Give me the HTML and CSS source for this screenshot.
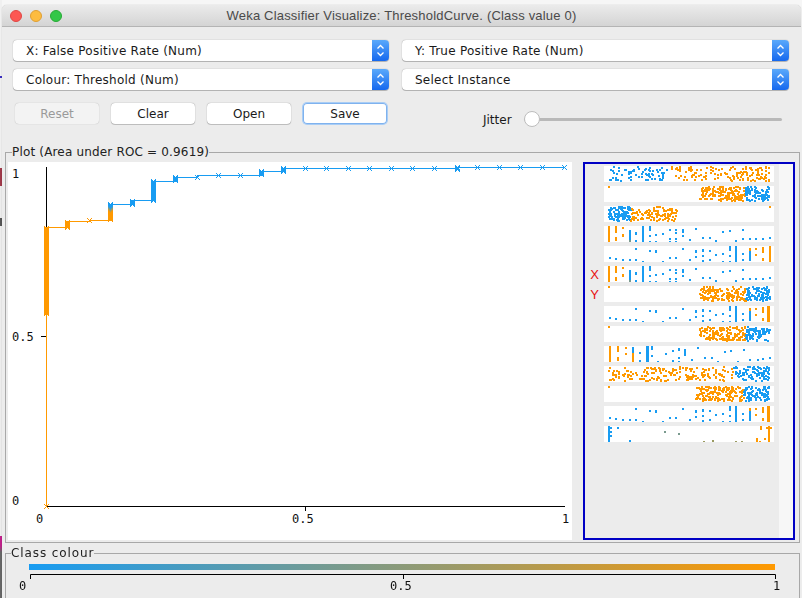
FILE: index.html
```html
<!DOCTYPE html>
<html lang="en">
<head>
    <meta charset="UTF-8">
    <meta name="viewport" content="width=device-width, initial-scale=1.0">
    <title>Weka Classifier Visualize</title>
    <link rel="stylesheet" href="styles.css">
</head>
<body>
    <div class="window">
        <div class="titlebar">
            <span class="light red"></span>
            <span class="light yellow"></span>
            <span class="light green"></span>
            <span class="title">Weka Classifier Visualize: ThresholdCurve. (Class value 0)</span>
        </div>

        <div class="combos">
            <div class="combo"><span>X: False Positive Rate (Num)</span><i class="arrows"><svg width="9" height="15" viewBox="0 0 9 15"><path d="M1.5 5.5 4.5 2.5 7.5 5.5M1.5 9.5 4.5 12.5 7.5 9.5"/></svg></i></div>
            <div class="combo"><span>Y: True Positive Rate (Num)</span><i class="arrows"><svg width="9" height="15" viewBox="0 0 9 15"><path d="M1.5 5.5 4.5 2.5 7.5 5.5M1.5 9.5 4.5 12.5 7.5 9.5"/></svg></i></div>
            <div class="combo"><span>Colour: Threshold (Num)</span><i class="arrows"><svg width="9" height="15" viewBox="0 0 9 15"><path d="M1.5 5.5 4.5 2.5 7.5 5.5M1.5 9.5 4.5 12.5 7.5 9.5"/></svg></i></div>
            <div class="combo"><span>Select Instance</span><i class="arrows"><svg width="9" height="15" viewBox="0 0 9 15"><path d="M1.5 5.5 4.5 2.5 7.5 5.5M1.5 9.5 4.5 12.5 7.5 9.5"/></svg></i></div>
        </div>

        <div class="toolbar">
            <div class="buttons">
                <button type="button" class="btn" disabled>Reset</button>
                <button type="button" class="btn">Clear</button>
                <button type="button" class="btn">Open</button>
                <button type="button" class="btn focused">Save</button>
            </div>
            <div class="jitter">
                <span>Jitter</span>
                <div class="slider"><div class="knob"></div></div>
            </div>
        </div>

        <fieldset class="group plot-group">
            <legend>Plot (Area under ROC = 0.9619)</legend>
            <div class="plot-body">
                <svg id="plot" class="plot" width="564" height="378" viewBox="8 162 564 378">
                    <g class="axis">
                        <path d="M46.5 167V506.5H565M305.5 506V511M41 336.5H46"/>
                        <text x="12" y="178">1</text>
                        <text x="12" y="341">0.5</text>
                        <text x="12" y="505">0</text>
                        <text x="36" y="523">0</text>
                        <text x="292" y="523">0.5</text>
                        <text x="562" y="523">1</text>
                    </g>
                    <path class="curve orange" d="M46.5 506V227.5H67.5V221.5H89.5V220.5H110.5V212"/>
                    <path class="curve blue" d="M110.5 212V204.5H132.5V200.5H153.5V181.5H175.5V177.5H197.5V175.5H261.5V171.5H283.5V168.5H457.5V167.5H565"/>
                </svg>
                <div class="attrs">
                    <div id="strips" class="strips"></div>
                    <div class="attrs-side"></div>
                </div>
            </div>
        </fieldset>

        <fieldset class="group class-group">
            <legend>Class colour</legend>
            <div class="colour-bar"></div>
            <svg class="colour-axis" width="790" height="24" viewBox="5 572 790 24">
                <path d="M29.5 579V574.5H774.5V579M402.5 574V579"/>
                <text x="18" y="590">0</text>
                <text x="389" y="590">0.5</text>
                <text x="772" y="590">1</text>
            </svg>
        </fieldset>
    </div>

    <script src="plot.js"></script>
</body>
</html>
```

FILE: styles.css
```css
*{
    margin: 0px;
    padding: 0px;
    box-sizing: border-box;
}

html, body{
    height: 100%;
    overflow: hidden;
}

body{
    background-color: #f6f6f6;
    /* bits of the desktop showing down the left edge */
    background-image: linear-gradient(to bottom,
        #f0f0f0 76px, #3a2fc0 76px, #3a2fc0 78px, #efefef 78px,
        #efefef 168px, #a03a4a 168px, #a03a4a 186px, #ececec 186px,
        #ececec 218px, #555 218px, #555 226px, #ececec 226px,
        #ececec 536px, #c0208a 536px, #c0208a 546px, #666 552px, #666 598px);
    background-size: 2px 100%;
    background-repeat: no-repeat;
    font-family: "DejaVu Sans", sans-serif;
    font-size: 12px;
    color: #1a1a1a;
}

.window{
    width: 799px;
    height: 593px;
    margin: 5px 0px 0px 2px;
    background-color: #ececec;
    border-radius: 5px 5px 0px 0px;
    box-shadow: 0px 0px 1px rgba(0, 0, 0, 0.35);
    overflow: hidden;
}

.titlebar{
    height: 22px;
    padding-left: 8px;
    display: flex;
    align-items: center;
    gap: 8px;
    background-image: linear-gradient(to bottom, #ebebeb, #d4d4d4);
    border-bottom: 1px solid #b4b4b4;
    position: relative;
}

.light{
    width: 12px;
    height: 12px;
    border-radius: 50%;
}
.red{ background-color: #fc5753; border: 1px solid #df4744; }
.yellow{ background-color: #fdbc40; border: 1px solid #de9f34; }
.green{ background-color: #33c748; border: 1px solid #27aa35; }

.title{
    position: absolute;
    left: 0px;
    right: 0px;
    text-align: center;
    font-family: "Liberation Sans", sans-serif;
    font-size: 13px;
    letter-spacing: 0.19px;
    color: #4a4a4a;
}

.combos{
    display: grid;
    grid-template-columns: 376px 387px;
    column-gap: 13px;
    row-gap: 8px;
    padding: 13px 0px 0px 11px;
}

.combo{
    height: 21px;
    display: flex;
    align-items: center;
    justify-content: space-between;
    padding-left: 13px;
    background-color: #fff;
    border-radius: 4px;
    letter-spacing: 0.25px;
    box-shadow: 0px 0px 1px rgba(0, 0, 0, 0.45), 0px 1px 0px rgba(0, 0, 0, 0.2);
}

.arrows{
    width: 17px;
    height: 21px;
    display: flex;
    align-items: center;
    justify-content: center;
    border-radius: 0px 4px 4px 0px;
    background-image: linear-gradient(to bottom, #5aa9fb, #1668ee);
}
.arrows path{
    fill: none;
    stroke: #fff;
    stroke-width: 1.3;
}

.toolbar{
    display: flex;
    padding: 13px 0px 0px 13px;
    height: 55px;
}

.buttons{
    display: flex;
    gap: 12px;
    width: 468px;
}

.btn{
    width: 84px;
    height: 21px;
    background-color: #fff;
    border: none;
    border-radius: 4px;
    font-family: "DejaVu Sans", sans-serif;
    font-size: 12px;
    color: #1a1a1a;
    box-shadow: 0px 0px 1px rgba(0, 0, 0, 0.5), 0px 1px 0px rgba(0, 0, 0, 0.15);
}
.btn[disabled]{
    background-color: #f3f3f3;
    color: #9a9a9a;
    box-shadow: 0px 0px 1px rgba(0, 0, 0, 0.3);
}
.btn.focused{
    box-shadow: inset 0px 0px 0px 1px #7fb2ee, 0px 0px 0px 1px #a9cdf5;
}

.jitter{
    display: flex;
    align-items: center;
    height: 16px;
    margin-top: 8px;
    gap: 12px;
}
.jitter span{
    padding-top: 2px;
}

.slider{
    width: 258px;
    height: 3px;
    background-color: #b9b9b9;
    border-radius: 2px;
    display: flex;
    align-items: center;
}
.knob{
    width: 16px;
    height: 16px;
    background-color: #fff;
    border: 1px solid #bdbdbd;
    border-radius: 50%;
}

.group{
    margin-left: 3px;
    width: 795px;
    border: 1px solid #a8a8a8;
    min-inline-size: 0px;
}
.group legend{
    margin-left: 4px;
    padding: 0px;
    height: 14px;
    line-height: 14px;
    font-size: 12px;
    letter-spacing: 0.17px;
    color: #222;
}
.class-group legend{
    margin-left: 5px;
    letter-spacing: 0.9px;
}
.plot-group{
    padding: 3px 2px 2px 2px;
}

.plot-body{
    display: flex;
    gap: 11px;
}

.plot{
    display: block;
    background-color: #fff;
}
.axis path{
    fill: none;
    stroke: #000;
    stroke-width: 1;
}
.axis text, .colour-axis text{
    font-family: "DejaVu Sans Mono", monospace;
    font-size: 12px;
    fill: #111;
}
.curve{
    fill: none;
    stroke-width: 1;
    shape-rendering: crispEdges;
}
.curve.orange{ stroke: #ff9900; }
.curve.blue{ stroke: #189cf2; }
.mark{
    fill: none;
    stroke-width: 1;
    shape-rendering: crispEdges;
}

.attrs{
    width: 212px;
    height: 378px;
    border: 2px solid #0000c4;
    background-color: #ececec;
    display: flex;
}
.strips{
    flex: 1;
    padding-top: 2px;
}
.attrs-side{
    width: 14px;
    background-color: #f7f7f7;
}

.attr-row{
    display: flex;
    height: 16px;
    margin-bottom: 4px;
}
.attr-axis{
    width: 19px;
    text-align: center;
    line-height: 18px;
    font-family: "Liberation Sans", sans-serif;
    font-size: 13px;
    color: #e81010;
}
.attr-row canvas{
    display: block;
    background-color: #fff;
}

.class-group{
    margin-top: 3px;
    height: 60px;
    padding: 4px 0px 0px 0px;
    border-bottom: none;
}

.colour-bar{
    width: 746px;
    height: 6px;
    margin-left: 23px;
    background-image: linear-gradient(to right, #189cf2, #ff9900);
}

.colour-axis{
    display: block;
    margin-top: 2px;
}
.colour-axis path{
    fill: none;
    stroke: #000;
    stroke-width: 1;
}
```

FILE: plot.js
```js
const BLUE = "#189cf2";
const ORANGE = "#ff9900";
const OCHRE = "#9a9a60";
const GREY = "#7a9a8e";

// ---- curve markers ----
const plot = document.getElementById("plot");

function addMark(x, y, colour){
    let m = document.createElementNS("http://www.w3.org/2000/svg", "path");
    m.setAttribute("class", "mark");
    m.setAttribute("stroke", colour);
    m.setAttribute("d", `M${x-2.5} ${y-2.5}L${x+2.5} ${y+2.5}M${x-2.5} ${y+2.5}L${x+2.5} ${y-2.5}`);
    plot.appendChild(m);
}

function mix(t){
    let r = Math.round(24 + (255-24)*t);
    let g = Math.round(156 + (153-156)*t);
    let b = Math.round(242 + (0-242)*t);
    return `rgb(${r},${g},${b})`;
}

// x, first y, last y
let orangeStacks = [[46.5,228.5,313.5],[46.5,506.5,506.5],[67.5,222.5,227.5],[89.5,220.5,220.5]];
let blueStacks = [[132.5,201.5,204.5],[153.5,181.5,200.5],[175.5,177.5,180.5],[197.5,177.5,177.5],[218.5,175.5,175.5],
    [240.5,175.5,175.5],[261.5,171.5,174.5],[283.5,168.5,171.5],[305.5,168.5,168.5],[326.5,168.5,168.5],
    [348.5,168.5,168.5],[369.5,168.5,168.5],[391.5,168.5,168.5],[412.5,168.5,168.5],[434.5,168.5,168.5],
    [457.5,167.5,169.5],[477.5,167.5,167.5],[499.5,167.5,167.5],[520.5,167.5,167.5],[542.5,167.5,167.5],[564.5,167.5,167.5]];

orangeStacks.forEach(s => {
    for(let y = s[1]; y <= s[2]; y++) addMark(s[0], y, ORANGE);
});
blueStacks.forEach(s => {
    for(let y = s[1]; y <= s[2]; y++) addMark(s[0], y, BLUE);
});
for(let y = 204.5; y <= 219.5; y++){
    addMark(110.5, y, mix(Math.min(1, Math.max(0, (y-208)/5))));
}

// ---- attribute strips ----
let seed = 7;
function rnd(){
    seed = (seed * 16807) % 2147483647;
    return seed / 2147483647;
}

function cloud(ctx, count, x0, x1, colour){
    ctx.fillStyle = colour;
    for(let i = 0; i < count; i++){
        let x = Math.round(x0 + rnd()*(x1-x0));
        let y = Math.round(rnd()*14);
        ctx.fillRect(x, y, 2, 2);
    }
}

// columns: x, colour, width, then pairs of y ranges
function columns(ctx, list){
    list.forEach(c => {
        ctx.fillStyle = c[1];
        for(let i = 3; i < c.length; i += 2){
            ctx.fillRect(c[0], c[i], c[2], c[i+1]-c[i]);
        }
    });
}

const o = ORANGE, b = BLUE;

const discrete = [[4,o,2,0,16],[11,o,2,0,7,11,15],[18,o,2,1,3,8,11],[25,b,2,4,14],[25,GREY,2,14,16],[31,b,2,6,9,14,16],
    [38,b,2,0,16],[45,b,2,0,5,9,11,15,16],[51,b,2,8,10,15,16],[58,b,2,7,9],[65,b,2,3,5,12,14,15,16],
    [71,b,2,3,5,6,8,12,14,15,16],[78,b,2,3,7,9,11],[85,b,2,13,15],[91,b,2,2,4],[98,b,2,11,13],[105,b,2,11,13],
    [111,b,2,14,16],[118,b,2,5,7],[125,b,2,4,6],[131,b,2,14,16],[138,b,2,3,5,12,14],[145,b,2,12,14],
    [151,b,2,12,14],[158,b,2,12,14],[165,b,2,11,13]];

const sparse = [[5,b,2,11,13],[11,b,2,12,14],[18,b,2,13,15],[25,b,2,13,15],[31,b,2,2,4,13,15],[38,b,2,15,16],
    [45,b,2,4,6],[51,b,2,4,7],[58,b,2,15,16],[65,b,2,11,13],[71,b,2,11,13],[78,b,2,2,4],[85,b,2,13,15],
    [91,b,2,4,7,10,12],[98,b,2,3,6,9,11,14,16],[105,b,2,4,6,13,15],[111,b,2,8,10],[118,b,2,7,9,15,16],
    [125,b,2,0,5,9,11,15,16],[131,b,2,0,16],[138,b,2,7,9,13,15],[145,b,2,5,15],[145,o,2,2,5],
    [151,o,2,2,4,8,10],[158,o,2,1,7,12,15],[165,o,2,0,16]];

const discrete2 = [[5,o,2,0,16],[13,o,2,0,6,11,15],[21,o,2,1,3,7,9],[28,b,2,1,7],[28,o,2,7,16],[35,b,2,6,8,14,16],
    [42,b,3,0,16],[47,b,2,0,4,9,11],[53,b,2,15,16],[61,b,2,7,9],[68,b,2,4,6,14,16],[74,b,2,2,5,11,13,15,16],
    [80,b,2,3,10],[87,b,2,13,15],[93,b,2,1,3],[100,b,2,11,13],[107,b,2,11,13],[113,b,2,15,16],[120,b,2,5,7],
    [126,b,2,4,6],[133,b,2,15,16],[139,b,2,3,5],[145,b,2,13,15],[153,b,2,13,15],[158,b,2,12,14],[165,b,2,11,13]];

const sparse2 = sparse.slice(0, -1).concat([[163,o,3,0,16]]);

const last = [[4,b,2,0,16],[6,b,2,1,3,5,7,9,11],[13,b,2,1,3],[25,b,2,14,16],[60,GREY,2,5,7],[74,GREY,2,7,9],
    [99,OCHRE,2,15,16],[108,OCHRE,2,14,16],[131,OCHRE,2,15,16],[137,OCHRE,2,15,16],[152,o,2,12,16],[155,o,2,15,16],
    [156,o,2,0,4],[160,o,2,12,14],[162,o,2,1,3],[164,o,2,0,16],[166,o,2,1,3]];

function classSplit(ctx){
    ctx.fillStyle = o;
    ctx.fillRect(4, 0, 2, 2);
    cloud(ctx, 150, 95, 141, o);
    cloud(ctx, 90, 141, 165, b);
}

const rows = [
    ctx => { cloud(ctx, 70, 5, 62, b); cloud(ctx, 135, 67, 165, o); },
    classSplit,
    ctx => { cloud(ctx, 100, 4, 26, b); cloud(ctx, 110, 26, 72, o); ctx.fillStyle = o; ctx.fillRect(165, 0, 2, 2); },
    ctx => columns(ctx, discrete),
    ctx => columns(ctx, sparse),
    ctx => columns(ctx, discrete),
    classSplit,
    ctx => columns(ctx, sparse2),
    classSplit,
    ctx => columns(ctx, discrete2),
    ctx => { cloud(ctx, 170, 4, 128, o); cloud(ctx, 90, 128, 165, b); },
    ctx => { ctx.fillStyle = o; ctx.fillRect(4, 0, 2, 2); cloud(ctx, 150, 91, 139, o); cloud(ctx, 90, 139, 165, b); },
    ctx => columns(ctx, sparse2),
    ctx => columns(ctx, last)
];

const strips = document.getElementById("strips");
rows.forEach((draw, i) => {
    let row = document.createElement("div");
    row.className = "attr-row";
    let label = document.createElement("div");
    label.className = "attr-axis";
    if(i == 5) label.textContent = "X";
    if(i == 6) label.textContent = "Y";
    let canvas = document.createElement("canvas");
    canvas.width = 170;
    canvas.height = 16;
    row.appendChild(label);
    row.appendChild(canvas);
    strips.appendChild(row);
    draw(canvas.getContext("2d"));
});
```
